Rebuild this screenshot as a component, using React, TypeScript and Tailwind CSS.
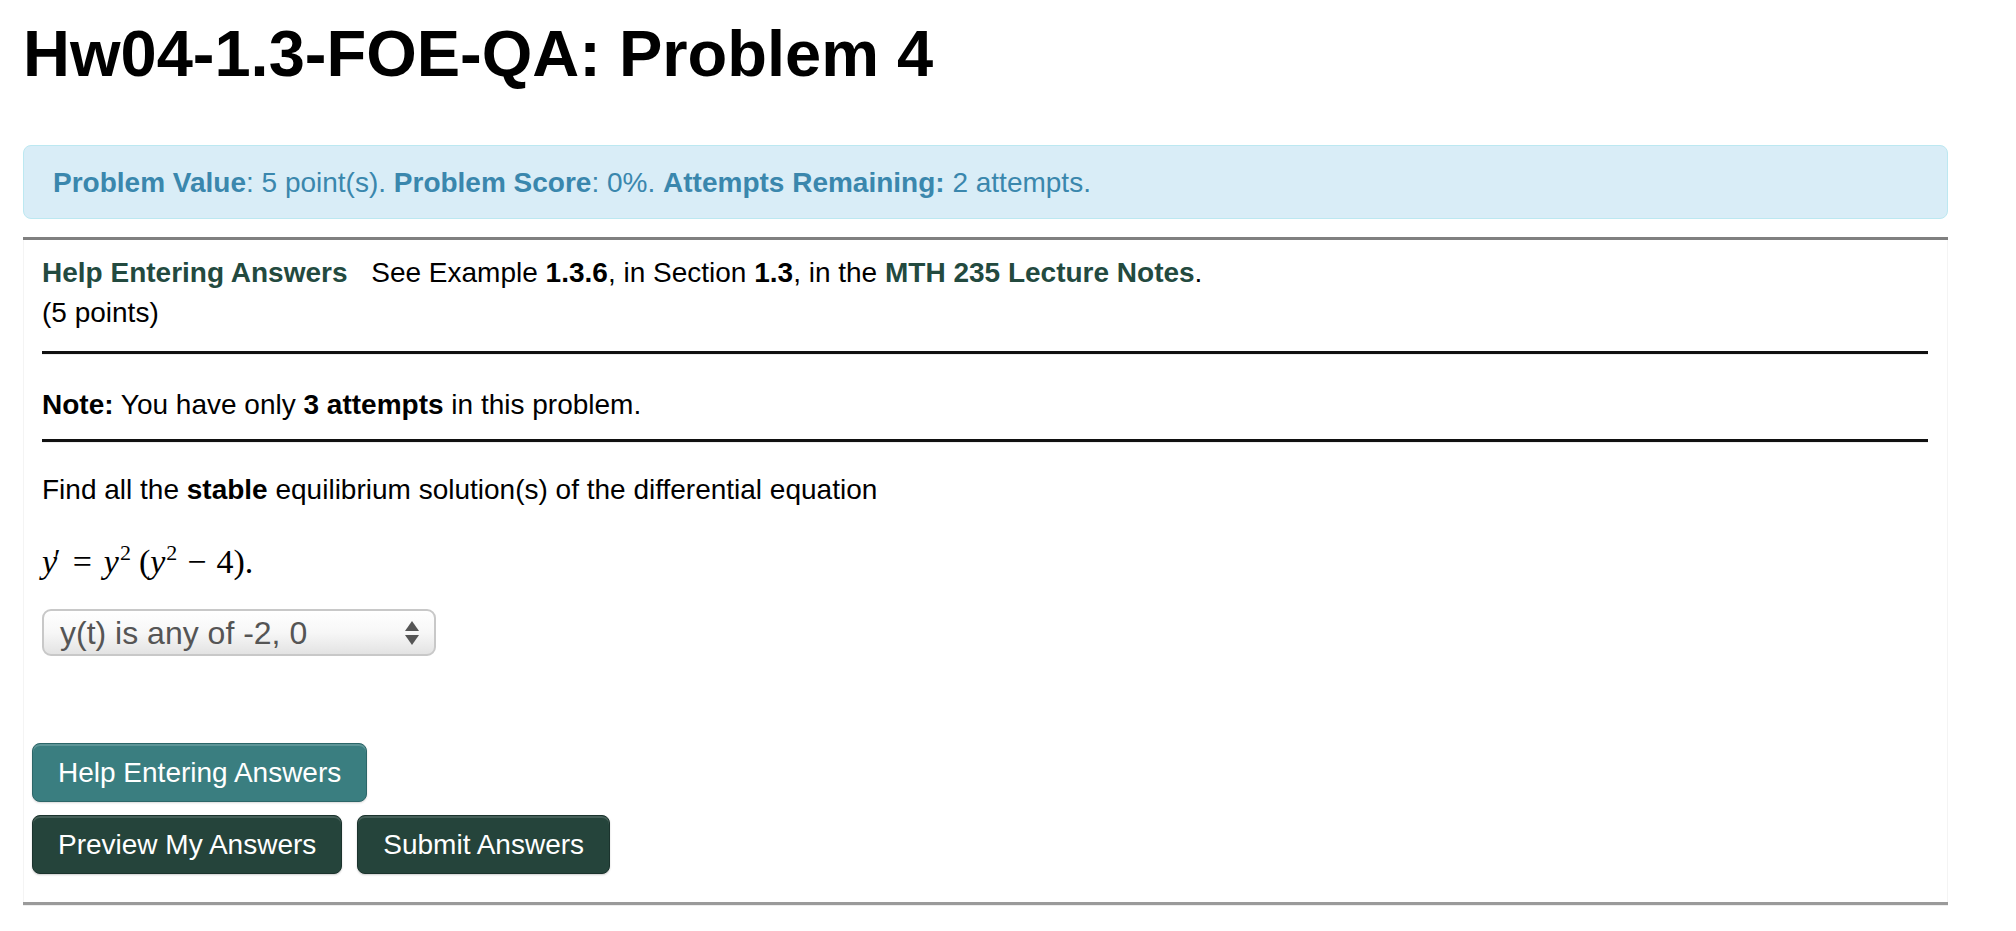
import React from "react";

function Bold({ children }: { children: React.ReactNode }) {
  return <b className="font-bold">{children}</b>;
}

function Sup({ children }: { children: React.ReactNode }) {
  return <span className="relative -top-[13px] ml-[1px] text-[22px]">{children}</span>;
}

export default function App() {
  return (
    <div className="min-h-screen bg-white font-['Liberation_Sans',Arial,sans-serif] text-black px-[23px] w-[1971px]">
      <h1 className="pt-[19px] text-[65px] leading-[70px] font-bold">
        Hw04-1.3-FOE-QA: Problem 4
      </h1>

      <div className="mt-[56px] rounded-[8px] border border-[#bce8f1] bg-[#d9edf7] px-[29px] pt-[17px] pb-[15px] text-[28px] leading-[40px] text-[#3a87ad]">
        <Bold>Problem Value</Bold>: 5 point(s). <Bold>Problem Score</Bold>: 0%.{" "}
        <Bold>Attempts Remaining:</Bold> 2 attempts.
      </div>

      <div className="mt-[18px] border-t-[3px] border-t-[#808080]">
        <div className="border-x border-[#f4f4f4] px-[18px] pr-[19px] pt-[13px] pb-[28px] text-[28px] leading-[40px]">
          <div>
            <a className="font-bold text-[#234a3f]">Help Entering Answers</a>
            <span className="ml-[16px]">
              {" "}See Example <Bold>1.3.6</Bold>, in Section <Bold>1.3</Bold>, in the{" "}
              <a className="font-bold text-[#234a3f]">MTH 235 Lecture Notes</a>.
            </span>
          </div>
          <div>(5 points)</div>

          <div className="mt-[18px] border-t-[3px] border-t-[#111] border-b border-b-[#eee]" />
          <div className="pt-[30px]">
            <Bold>Note:</Bold> You have only <Bold>3 attempts</Bold> in this problem.
          </div>
          <div className="mt-[14px] border-t-[3px] border-t-[#111] border-b border-b-[#eee]" />

          <div className="pt-[27px]">
            Find all the <Bold>stable</Bold> equilibrium solution(s) of the differential equation
          </div>

          <div className="mt-[32px] font-['Liberation_Serif','Times_New_Roman',serif] text-[34px] leading-[40px]">
            <i>y</i>
            <span className="relative -top-[4px] -ml-[3px] text-[30px]">′</span>
            <span className="mx-[12px]">=</span>
            <i>y</i>
            <Sup>2</Sup>
            <span className="ml-[8px]">(</span>
            <i>y</i>
            <Sup>2</Sup>
            <span className="mx-[10px]">−</span>
            <span>4).</span>
          </div>

          <div className="mt-[23px] flex h-[47px] w-[394px] items-center justify-between rounded-[9px] border-2 border-[#c8c8c8] bg-gradient-to-b from-white via-[#f7f7f7] to-[#e3e3e3] pl-[16px] pr-[14px] text-[32px] text-[#555]">
            <span className="leading-[40px]">y(t) is any of -2, 0</span>
            <svg width="16" height="28" viewBox="0 0 16 28">
              <polygon points="8,2 15,12 1,12" fill="#555" />
              <polygon points="1,16 15,16 8,26" fill="#555" />
            </svg>
          </div>

          <div className="mt-[87px] -ml-[10px] flex flex-col gap-[13px] items-start">
            <button className="h-[59px] rounded-[8px] border border-[#2c6668] bg-[#3a7e80] px-[25px] text-[28px] text-white shadow-[inset_0_2px_0_rgba(255,255,255,0.18),0_1px_2px_rgba(0,0,0,0.15)]">
              Help Entering Answers
            </button>
            <div className="flex gap-[15px]">
              <button className="h-[59px] rounded-[8px] border border-[#1b332d] bg-[#25443b] px-[25px] text-[28px] text-white shadow-[inset_0_2px_0_rgba(255,255,255,0.15),0_1px_2px_rgba(0,0,0,0.2)]">
                Preview My Answers
              </button>
              <button className="h-[59px] rounded-[8px] border border-[#1b332d] bg-[#25443b] px-[25px] text-[28px] text-white shadow-[inset_0_2px_0_rgba(255,255,255,0.15),0_1px_2px_rgba(0,0,0,0.2)]">
                Submit Answers
              </button>
            </div>
          </div>
        </div>
        <div className="border-t-[3px] border-t-[#9a9a9a] border-b border-b-[#eee]" />
      </div>
    </div>
  );
}
